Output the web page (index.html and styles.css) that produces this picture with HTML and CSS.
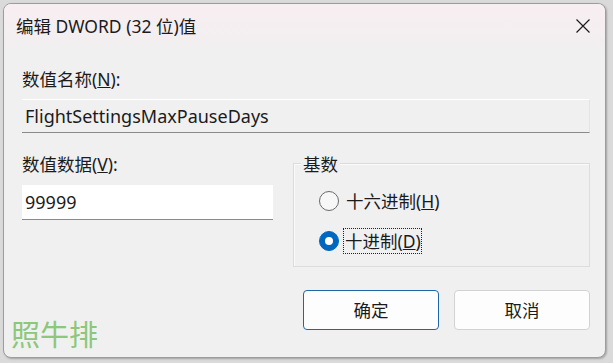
FILE: index.html
```html
<!DOCTYPE html>
<html lang="zh-CN">
<head>
<meta charset="utf-8">
<title>编辑 DWORD (32 位)值</title>
<link rel="stylesheet" href="styles.css">
</head>
<body>
<div class="window">
  <div class="titlebar">
    <span class="title">编辑 DWORD (32 位)值</span>
    <span class="close" aria-label="关闭">
      <svg width="16" height="16" viewBox="0 0 16 16"><path d="M1.5 1.5 L14.5 14.5 M14.5 1.5 L1.5 14.5" stroke="#1c1c1c" stroke-width="1.2" fill="none"/></svg>
    </span>
  </div>
  <div class="content">
    <div class="label">数值名称(<u>N</u>):</div>
    <div class="namefield">FlightSettingsMaxPauseDays</div>
    <div class="lower">
      <div class="datacol">
        <div class="label">数值数据(<u>V</u>):</div>
        <div class="datafield">99999</div>
      </div>
      <div class="group">
        <div class="legend">基数</div>
        <div class="radio-row first">
          <span class="radio"></span>
          <span class="rtext">十六进制(<u>H</u>)</span>
        </div>
        <div class="radio-row">
          <span class="radio checked"></span>
          <span class="rtext focus">十进制(<u>D</u>)</span>
        </div>
      </div>
    </div>
    <div class="buttons">
      <div class="btn default">确定</div>
      <div class="btn">取消</div>
    </div>
  </div>
  <div class="watermark">照牛排</div>
</div>
</body>
</html>
```

FILE: styles.css
```css
html, body {
  margin: 0;
  padding: 0;
}
body {
  background: #dadada;
  width: 613px;
  height: 363px;
  overflow: hidden;
  font-family: "Noto Sans", "Noto Sans CJK SC", sans-serif;
  font-size: 17.5px;
  color: #1b1b1b;
}
.window {
  position: relative;
  margin: 3px 0 0 3px;
  width: 601px;
  height: 353px;
  border: 1px solid #9d9d9d;
  border-radius: 8px;
  background: #f0f0f0;
  box-shadow: 1px 1px 2px rgba(0,0,0,0.25);
  overflow: hidden;
}
.titlebar {
  height: 46px;
  display: flex;
  align-items: center;
  justify-content: space-between;
  padding: 0 14px 0 12px;
  background: linear-gradient(#f8eef1, #f1eff0);
}
.title {
  line-height: 20px;
  margin-top: -2px;
}
.close {
  display: flex;
  margin-top: -3px;
}
.content {
  padding: 0 15px 0 18px;
}
.label {
  line-height: 20px;
  margin-top: 19px;
}
.namefield {
  margin-top: 10px;
  height: 32px;
  line-height: 32px;
  font-size: 18px;
  border-top: 1px solid #ffffff;
  border-bottom: 1px solid #8a8a8a;
  border-right: 1px solid #e4e4e4;
  padding-left: 3px;
}
.lower {
  display: grid;
  grid-template-columns: 251px 297px;
  column-gap: 20px;
}
.datacol .label {
  margin-top: 21px;
}
.datafield {
  margin-top: 11px;
  height: 34px;
  line-height: 34px;
  font-size: 18px;
  background: #ffffff;
  border-bottom: 1px solid #8a8a8a;
  padding-left: 3px;
}
.group {
  margin-top: 30px;
  height: 102px;
  border: 1px solid #dcdcdc;
  box-shadow: inset 1px 1px 0 #fafafa;
  position: relative;
}
.legend {
  position: absolute;
  top: -10px;
  left: 7px;
  line-height: 20px;
  padding: 0 2px;
  background: #f0f0f0;
}
.radio-row {
  display: flex;
  align-items: center;
  margin-left: 25px;
  height: 26px;
  margin-top: 14px;
}
.radio-row.first {
  margin-top: 24px;
}
.radio {
  width: 18px;
  height: 18px;
  border: 1px solid #6a6a6a;
  border-radius: 50%;
  background: #f7f7f7;
  box-sizing: content-box;
  margin-right: 7px;
}
.radio.checked {
  background: #0067c0;
  border-color: #0067c0;
  position: relative;
}
.radio.checked::after {
  content: "";
  position: absolute;
  left: 5px;
  top: 5px;
  width: 8px;
  height: 8px;
  border-radius: 50%;
  background: #ffffff;
}
.rtext {
  line-height: 24px;
}
.rtext.focus {
  outline: 1px dotted #222;
  margin-left: -2px;
  padding-left: 1px;
}
.buttons {
  display: flex;
  justify-content: flex-end;
  gap: 15px;
  margin-top: 23px;
}
.btn {
  width: 134px;
  height: 38px;
  line-height: 38px;
  text-align: center;
  background: #fdfdfd;
  border: 1px solid #d2d2d2;
  border-radius: 4px;
}
.btn.default {
  border-color: #1f66a8;
}
.watermark {
  position: absolute;
  left: 7px;
  top: 311px;
  font-size: 29px;
  line-height: 36px;
  color: #8cc77a;
  font-family: "Noto Sans CJK SC", sans-serif;
}
```
